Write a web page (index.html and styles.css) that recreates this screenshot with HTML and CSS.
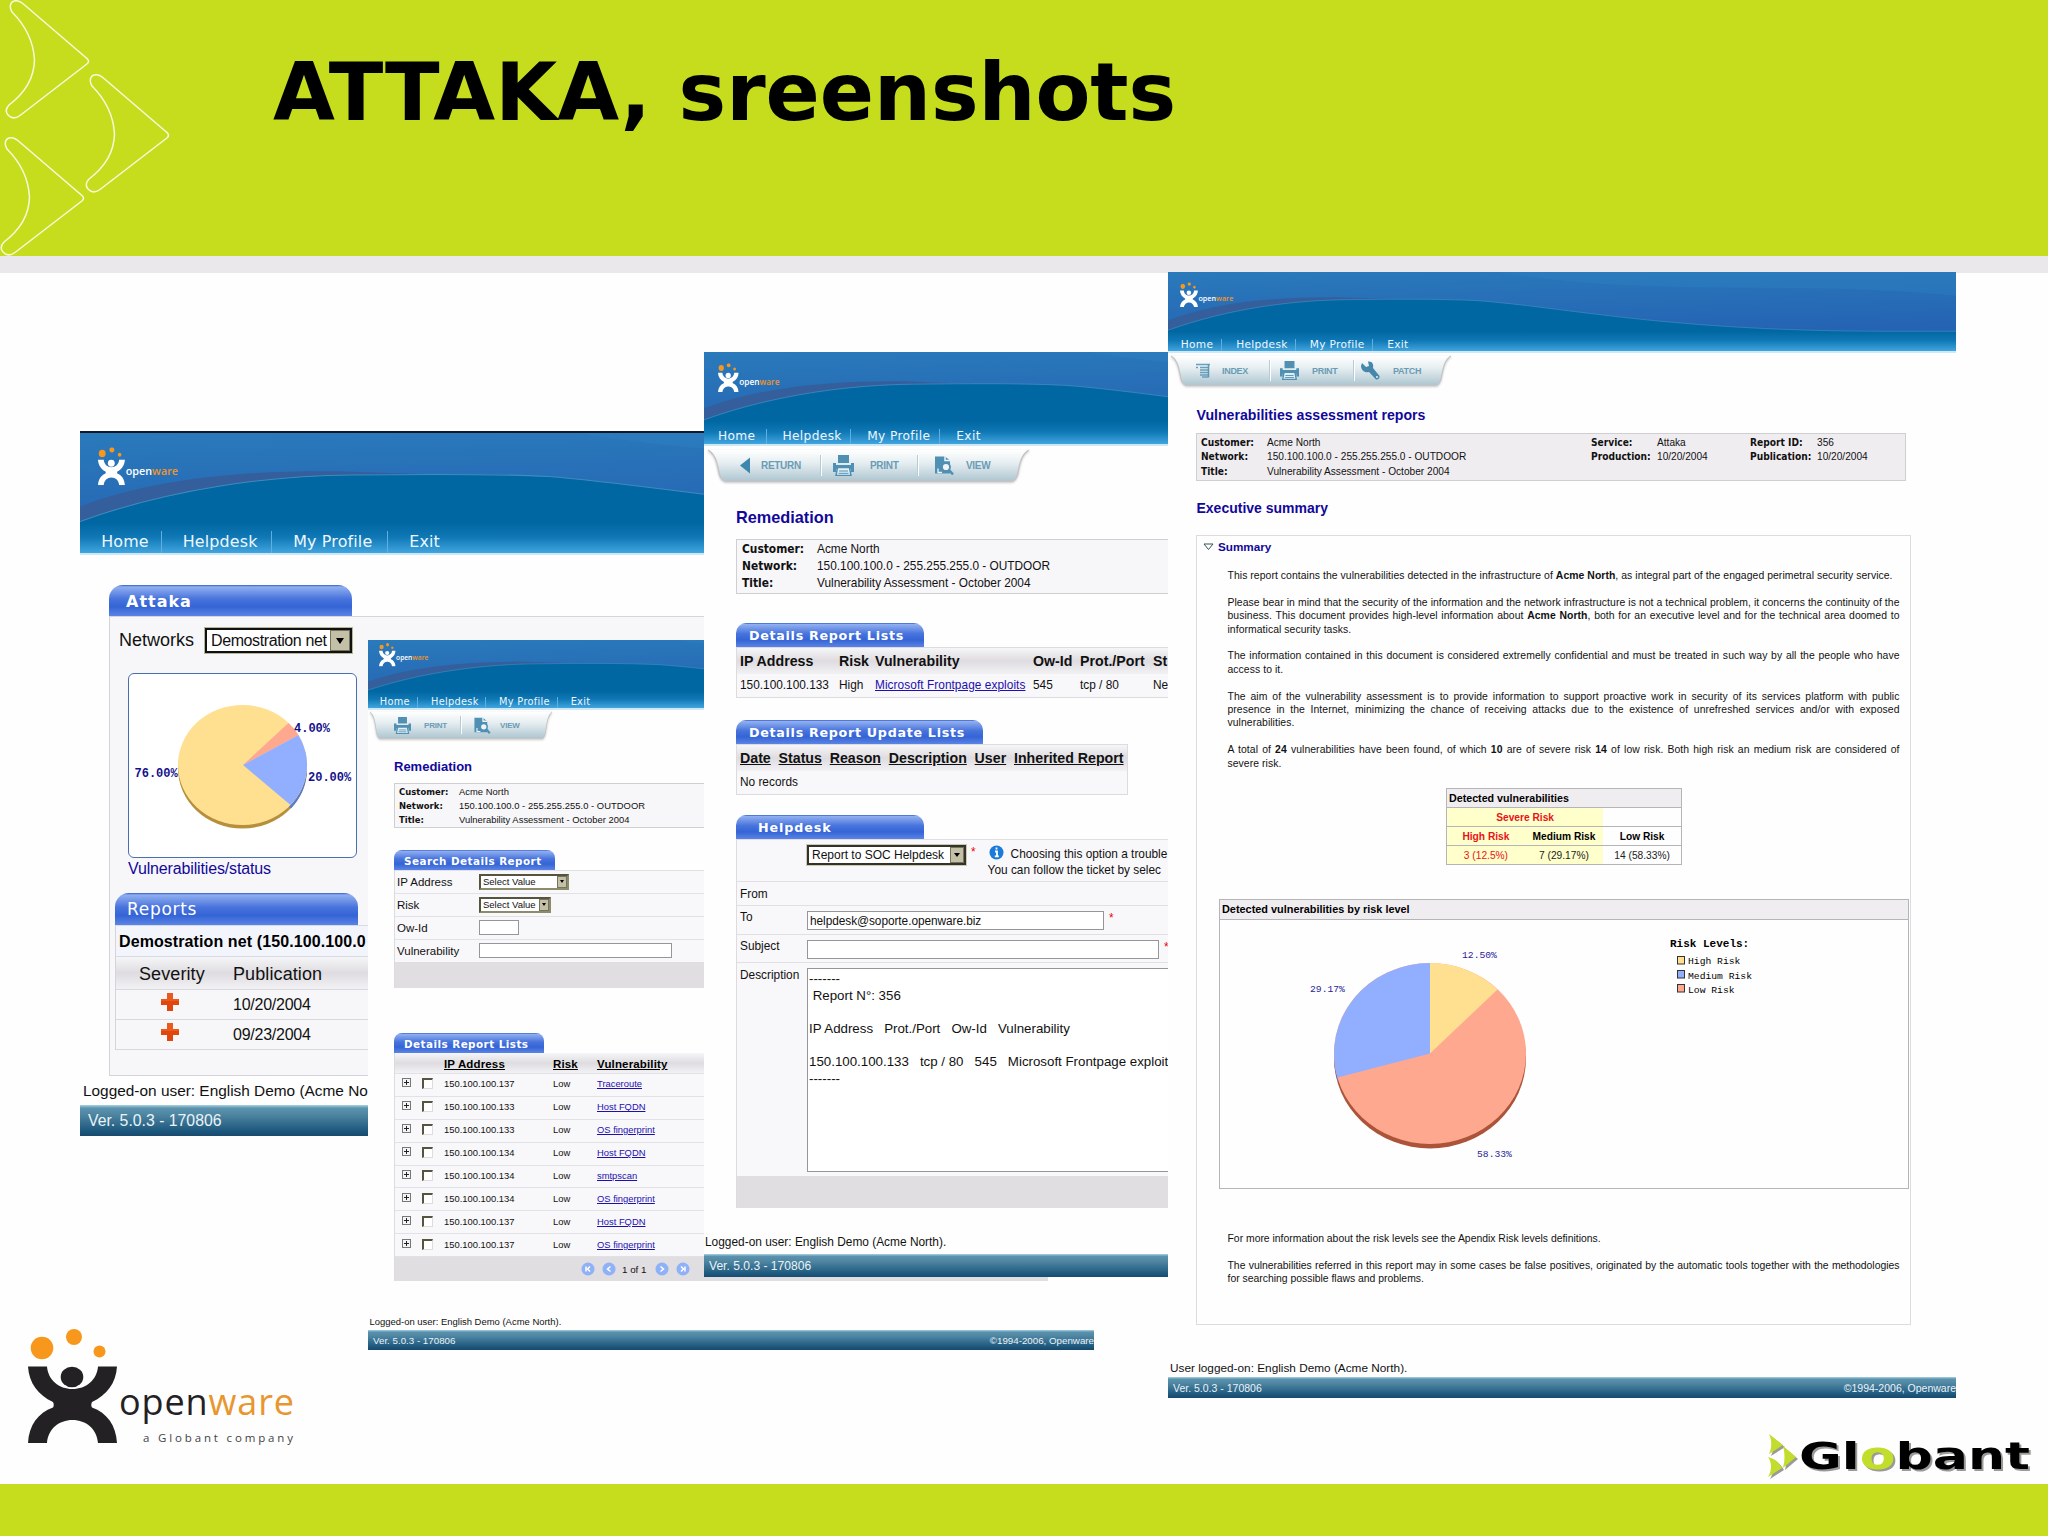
FILE: index.html
```html
<!DOCTYPE html>
<html lang="en">
<head>
    <meta charset="UTF-8">
    <meta name="viewport" content="width=device-width, initial-scale=1.0">
    <title>ATTAKA, sreenshots</title>
    <link rel="stylesheet" href="styles.css">
</head>
<body>
    <!-- Shared shapes -->
    <svg class="defs" width="0" height="0">
        <defs>
            <linearGradient id="sky" x1="0" y1="0" x2="0.25" y2="1">
                <stop offset="0" stop-color="#2a7abb"/>
                <stop offset="1" stop-color="#2460b2"/>
            </linearGradient>
            <linearGradient id="sea" x1="0" y1="0" x2="0" y2="1">
                <stop offset="0" stop-color="#0167a2"/>
                <stop offset="0.62" stop-color="#0167a2"/>
                <stop offset="0.8" stop-color="#0f78b5"/>
                <stop offset="1" stop-color="#41a5df"/>
            </linearGradient>
            <linearGradient id="metal" x1="0" y1="0" x2="0" y2="1">
                <stop offset="0" stop-color="#ffffff"/>
                <stop offset="0.4" stop-color="#e6eef1"/>
                <stop offset="1" stop-color="#abc4cf"/>
            </linearGradient>
        </defs>
        <symbol id="banner" viewBox="0 0 788 80" preserveAspectRatio="none">
            <rect width="788" height="80" fill="url(#sky)"/>
            <path d="M330 0C480 26 620 8 788 24V0Z" fill="#2f84c4" opacity="0.35"/>
            <path d="M0 49C50 30 110 25 170 25.500L230 27.500V60H0Z" fill="#345f9c"/>
            <path d="M0 59C60 37 125 28.500 180 28C220 27.500 270 27 310 29C400 36 500 60 720 60H788V80H0Z" fill="url(#sea)"/>
            <path d="M0 59C60 37 125 28.500 180 28C220 27.500 270 27 310 29C400 36 500 60 720 60H788" fill="none" stroke="#3f8bbf" stroke-width="0.7"/>
        </symbol>
        <symbol id="mark" viewBox="0 0 90 114" preserveAspectRatio="none">
            <g fill="#f7981d">
                <circle cx="14" cy="19" r="11.3"/>
                <circle cx="46" cy="8" r="8"/>
                <circle cx="71.5" cy="22.500" r="6"/>
            </g>
            <ellipse cx="44" cy="48" rx="11.300" ry="10.300"/>
            <path d="M0 37.500H19C20 51 31 60 44.500 60C58 60 69 51 70 37.500H89C88 54 79 66 64 73C63 75 63 77 64 78.500C79 84 88 96 89 114H70C69 100 58 91 44.500 91C31 91 20 100 19 114H0C1 96 10 84 25 78.500C26 77 26 75 25 73C10 66 1 54 0 37.500Z"/>
        </symbol>
        <symbol id="logo" viewBox="0 0 82 38.500">
            <use href="#mark" width="27.500" height="38.500" fill="#fff"/>
            <text x="28" y="28.500" class="logo-text" textLength="53" lengthAdjust="spacingAndGlyphs">open<tspan fill="#f0952a">ware</tspan></text>
        </symbol>
        <symbol id="tray" viewBox="0 0 280 31" preserveAspectRatio="none">
            <path d="M0 1C7 5 8 14 10 24Q12 31 17 31H264Q268 31 270 24C272 14 273 5 280 1Z" fill="url(#metal)"/>
            <path d="M0 1C7 5 8 14 10 24Q12 30.500 17 30.500H264Q268 30.500 270 24C272 14 273 5 280 1" fill="none" stroke="#c6c4c6" stroke-width="1.200"/>
        </symbol>
        <symbol id="i-print" viewBox="0 0 21 21">
            <path d="M5 0H16V8H5Z" fill="#4f90b3"/>
            <path d="M0 8H3V10H18V8H21V17H18V14H3V17H0Z" fill="#4f90b3"/>
            <path d="M4.500 12.500H16.500L18 20.500H3Z" fill="#e4eef3" stroke="#4f90b3" stroke-width="1.500"/>
            <path d="M6 16H15M5.500 18.300H15.500" stroke="#4f90b3"/>
        </symbol>
        <symbol id="i-view" viewBox="0 0 19 20">
            <path d="M0 1H10L15 5V18H0Z" fill="#4f90b3"/>
            <path d="M10 0V5H15" fill="none" stroke="#eef4f7" stroke-width="1.500"/>
            <circle cx="11" cy="11.500" r="4" fill="#eef4f7" stroke="#4f90b3" stroke-width="1.800"/>
            <path d="M3 13V17H7" fill="none" stroke="#eef4f7" stroke-width="1.300"/>
            <path d="M14 14.500L18 19" stroke="#4f90b3" stroke-width="2.600"/>
        </symbol>
        <symbol id="i-return" viewBox="0 0 11 17">
            <path d="M0 8.500L10 0.500V16.500Z" fill="#3f88ad"/>
        </symbol>
        <symbol id="i-index" viewBox="0 0 14 14">
            <path d="M0 1H14M4 4H13M0 4H2M4 6.500H13M4 9H13M4 11.500H13M6 13.500H12" stroke="#6a9fbb" stroke-width="1.500"/>
            <path d="M12.500 1V14" stroke="#5c96b5" stroke-width="1.500"/>
        </symbol>
        <symbol id="i-patch" viewBox="0 0 19 19">
            <path d="M1 2L5 6L8 5L7 0.500C11 0 13 3 12 7L18.500 15C19 17 17 19 15 18.500L8 11C4 12.500 0 9 0 5Z" fill="#4787ab"/>
            <circle cx="16" cy="16" r="1" fill="#e8f0f4"/>
        </symbol>
        <symbol id="i-cross" viewBox="0 0 18 18">
            <path d="M6 0H12V6H18V12H12V18H6V12H0V6H6Z" fill="#e0470d"/>
            <path d="M6 0H12V6H18V8H0V6H6Z" fill="#f0652a" opacity="0.6"/>
        </symbol>
        <symbol id="i-plus" viewBox="0 0 9 9">
            <rect x="0.500" y="0.500" width="8" height="8" fill="#f4f4f4" stroke="#777"/>
            <path d="M2 4.500H7M4.500 2V7" stroke="#222"/>
        </symbol>
    </svg>

    <header class="slide-header">
        <svg class="arrows" width="180" height="258" viewBox="0 0 180 258">
            <defs>
                <path id="arrow" d="M24 4.500L87.500 59Q89.500 61.500 87.500 63.500L20 115.500Q13 120.500 8 115Q4 110.500 9 105Q34 86 34.500 60Q33 33 12 12Q8.500 6 12 2Q17.500 -1.500 24 4.500Z"/>
            </defs>
            <use href="#arrow"/>
            <use href="#arrow" x="80" y="74"/>
            <use href="#arrow" x="-5" y="137"/>
        </svg>
        <h1>ATTAKA, sreenshots</h1>
    </header>

    <!-- Main menu window -->
    <section class="window win-home">
        <div class="banner">
            <svg class="sky"><use href="#banner"/></svg>
            <svg class="logo"><use href="#logo"/></svg>
            <nav><a>Home</a><a>Helpdesk</a><a>My Profile</a><a>Exit</a></nav>
        </div>
        <div class="tab">Attaka</div>
        <div class="panel">
            <div class="networks">
                <span>Networks</span>
                <div class="select"><span>Demostration net</span><i></i></div>
            </div>
            <div class="chart">
                <svg width="227" height="183" viewBox="130 674 227 183">
                    <ellipse cx="243.500" cy="768.500" rx="64.500" ry="60" fill="#b58f3c"/>
                    <path d="M244 765L292 808.500A64.500 60 0 0 0 308 768V765Z" fill="#5d7cc4"/>
                    <ellipse cx="243.500" cy="765" rx="64.500" ry="60" fill="#ffdf90"/>
                    <path d="M244 765L289.500 723A64.500 60 0 0 1 299.500 735Z" fill="#ffa890"/>
                    <path d="M244 765L299.500 735A64.500 60 0 0 1 291.500 805Z" fill="#92aeff"/>
                    <text x="295" y="732">4.00%</text>
                    <text x="135.500" y="777">76.00%</text>
                    <text x="309" y="781">20.00%</text>
                </svg>
            </div>
            <div class="status">Vulnerabilities/status</div>
            <div class="tab tab-reports">Reports</div>
            <div class="reports">
                <div class="net">Demostration net (150.100.100.0</div>
                <div class="cols head"><span>Severity</span><span>Publication</span></div>
                <div class="cols"><svg><use href="#i-cross"/></svg><span>10/20/2004</span></div>
                <div class="cols"><svg><use href="#i-cross"/></svg><span>09/23/2004</span></div>
            </div>
        </div>
        <div class="logged">Logged-on user: English Demo (Acme No</div>
        <div class="version"><span>Ver. 5.0.3 - 170806</span></div>
    </section>

    <!-- Remediation search window -->
    <section class="window win-search">
        <div class="banner">
            <svg class="sky"><use href="#banner"/></svg>
            <svg class="logo"><use href="#logo"/></svg>
            <nav><a>Home</a><a>Helpdesk</a><a>My Profile</a><a>Exit</a></nav>
        </div>
        <div class="toolbar">
            <svg class="tray"><use href="#tray"/></svg>
            <div class="tool"><svg><use href="#i-print"/></svg><b>PRINT</b></div>
            <div class="tool"><svg><use href="#i-view"/></svg><b>VIEW</b></div>
        </div>
        <h2>Remediation</h2>
        <dl class="info">
            <dt>Customer:</dt><dd>Acme North</dd>
            <dt>Network:</dt><dd>150.100.100.0 - 255.255.255.0 - OUTDOOR</dd>
            <dt>Title:</dt><dd>Vulnerability Assessment - October 2004</dd>
        </dl>
        <div class="tab tab-search">Search Details Report</div>
        <div class="form">
            <div class="field"><label>IP Address</label><div class="select ip"><span>Select Value</span><i></i></div></div>
            <div class="field"><label>Risk</label><div class="select risk"><span>Select Value</span><i></i></div></div>
            <div class="field"><label>Ow-Id</label><div class="input short"></div></div>
            <div class="field"><label>Vulnerability</label><div class="input long"></div></div>
            <div class="form-foot"></div>
        </div>
        <div class="tab tab-list">Details Report Lists</div>
        <div class="list">
            <div class="row head"><span></span><span></span><u>IP Address</u><u>Risk</u><u>Vulnerability</u></div>
            <div class="row"><svg><use href="#i-plus"/></svg><i class="check"></i><span>150.100.100.137</span><span>Low</span><a>Traceroute</a></div>
            <div class="row"><svg><use href="#i-plus"/></svg><i class="check"></i><span>150.100.100.133</span><span>Low</span><a>Host FQDN</a></div>
            <div class="row"><svg><use href="#i-plus"/></svg><i class="check"></i><span>150.100.100.133</span><span>Low</span><a>OS fingerprint</a></div>
            <div class="row"><svg><use href="#i-plus"/></svg><i class="check"></i><span>150.100.100.134</span><span>Low</span><a>Host FQDN</a></div>
            <div class="row"><svg><use href="#i-plus"/></svg><i class="check"></i><span>150.100.100.134</span><span>Low</span><a>smtpscan</a></div>
            <div class="row"><svg><use href="#i-plus"/></svg><i class="check"></i><span>150.100.100.134</span><span>Low</span><a>OS fingerprint</a></div>
            <div class="row"><svg><use href="#i-plus"/></svg><i class="check"></i><span>150.100.100.137</span><span>Low</span><a>Host FQDN</a></div>
            <div class="row"><svg><use href="#i-plus"/></svg><i class="check"></i><span>150.100.100.137</span><span>Low</span><a>OS fingerprint</a></div>
            <div class="pager">
                <svg viewBox="0 0 14 14"><circle cx="7" cy="7" r="6.500"/><path d="M5 4.500V9.500M9 4.500L6.500 7L9 9.500"/></svg>
                <svg viewBox="0 0 14 14"><circle cx="7" cy="7" r="6.500"/><path d="M8.500 4.500L5.500 7L8.500 9.500"/></svg>
                <span>1 of 1</span>
                <svg viewBox="0 0 14 14"><circle cx="7" cy="7" r="6.500"/><path d="M5.500 4.500L8.500 7L5.500 9.500"/></svg>
                <svg viewBox="0 0 14 14"><circle cx="7" cy="7" r="6.500"/><path d="M9 4.500V9.500M5 4.500L7.500 7L5 9.500"/></svg>
            </div>
        </div>
        <div class="logged">Logged-on user: English Demo (Acme North).</div>
        <div class="version"><span>Ver. 5.0.3 - 170806</span><span>©1994-2006, Openware</span></div>
    </section>

    <!-- Remediation ticket window -->
    <section class="window win-ticket">
        <div class="banner">
            <svg class="sky"><use href="#banner"/></svg>
            <svg class="logo"><use href="#logo"/></svg>
            <nav><a>Home</a><a>Helpdesk</a><a>My Profile</a><a>Exit</a></nav>
        </div>
        <div class="toolbar">
            <svg class="tray"><use href="#tray"/></svg>
            <div class="tool t-return"><svg><use href="#i-return"/></svg><b>RETURN</b></div>
            <div class="tool"><svg><use href="#i-print"/></svg><b>PRINT</b></div>
            <div class="tool"><svg><use href="#i-view"/></svg><b>VIEW</b></div>
        </div>
        <h2>Remediation</h2>
        <dl class="info">
            <dt>Customer:</dt><dd>Acme North</dd>
            <dt>Network:</dt><dd>150.100.100.0 - 255.255.255.0 - OUTDOOR</dd>
            <dt>Title:</dt><dd>Vulnerability Assessment - October 2004</dd>
        </dl>
        <div class="tab">Details Report Lists</div>
        <div class="details">
            <div class="row head"><span>IP Address</span><span>Risk</span><span>Vulnerability</span><span>Ow-Id</span><span>Prot./Port</span><span>St</span></div>
            <div class="row"><span>150.100.100.133</span><span>High</span><a>Microsoft Frontpage exploits</a><span>545</span><span>tcp / 80</span><span>Ne</span></div>
        </div>
        <div class="tab tab-update">Details Report Update Lists</div>
        <div class="updates">
            <div class="row head"><u>Date</u><u>Status</u><u>Reason</u><u>Description</u><u>User</u><u>Inherited Report</u></div>
            <div class="none">No records</div>
        </div>
        <div class="tab tab-help">Helpdesk</div>
        <div class="form">
            <div class="field f-option">
                <label></label>
                <div class="select"><span>Report to SOC Helpdesk</span><i></i></div>
                <em>*</em>
                <p><svg width="15" height="15" viewBox="0 0 15 15"><circle cx="7.500" cy="7.500" r="7" fill="#1b7bd8"/><path d="M7.500 2.500V4.500M6 6.500H8V11M5.800 11.300H9.800" fill="none" stroke="#fff" stroke-width="1.800"/></svg>Choosing this option a trouble<br>You can follow the ticket by selec</p>
            </div>
            <div class="field f-from"><label>From</label></div>
            <div class="field f-to"><label>To</label><div class="input">helpdesk@soporte.openware.biz</div><em>*</em></div>
            <div class="field f-subject"><label>Subject</label><div class="input"></div><em>*</em></div>
            <div class="field f-desc">
                <label>Description</label>
                <pre>-------
 Report N°: 356

IP Address   Prot./Port   Ow-Id   Vulnerability

150.100.100.133   tcp / 80   545   Microsoft Frontpage exploit
-------</pre>
            </div>
            <div class="form-foot"></div>
        </div>
        <div class="logged">Logged-on user: English Demo (Acme North).</div>
        <div class="version"><span>Ver. 5.0.3 - 170806</span></div>
    </section>

    <!-- Report window -->
    <section class="window win-report">
        <div class="banner">
            <svg class="sky"><use href="#banner"/></svg>
            <svg class="logo"><use href="#logo"/></svg>
            <nav><a>Home</a><a>Helpdesk</a><a>My Profile</a><a>Exit</a></nav>
        </div>
        <div class="toolbar">
            <svg class="tray"><use href="#tray"/></svg>
            <div class="tool t-index"><svg><use href="#i-index"/></svg><b>INDEX</b></div>
            <div class="tool"><svg><use href="#i-print"/></svg><b>PRINT</b></div>
            <div class="tool t-patch"><svg><use href="#i-patch"/></svg><b>PATCH</b></div>
        </div>
        <h2>Vulnerabilities assessment repors</h2>
        <dl class="info">
            <dt>Customer:</dt><dd>Acme North</dd><dt>Service:</dt><dd>Attaka</dd><dt>Report ID:</dt><dd>356</dd>
            <dt>Network:</dt><dd>150.100.100.0 - 255.255.255.0 - OUTDOOR</dd><dt>Production:</dt><dd>10/20/2004</dd><dt>Publication:</dt><dd>10/20/2004</dd>
            <dt>Title:</dt><dd>Vulnerability Assessment - October 2004</dd>
        </dl>
        <h2 class="exec">Executive summary</h2>
        <div class="summary">
            <h3><svg width="11" height="8" viewBox="0 0 11 8"><path d="M1 1H10L5.500 6.500Z" fill="#fff" stroke="#355" /></svg>Summary</h3>
            <p>This report contains the vulnerabilities detected in the infrastructure of <b>Acme North</b>, as integral part of the engaged perimetral security service.</p>
            <p>Please bear in mind that the security of the information and the network infrastructure is not a technical problem, it concerns the continuity of the business. This document provides high-level information about <b>Acme North</b>, both for an executive level and for the technical area doomed to informatical security tasks.</p>
            <p>The information contained in this document is considered extremelly confidential and must be treated in such way by all the people who have access to it.</p>
            <p>The aim of the vulnerability assessment is to provide information to support proactive work in security of its services platform with public presence&nbsp;in the Internet, minimizing the chance of receiving attacks due to the existence of unrefreshed services and/or with exposed vulnerabilities.</p>
            <p>A total of <b>24</b> vulnerabilities have been found, of which <b>10</b> are of severe risk <b>14</b> of low risk. Both high risk an medium risk are considered of severe&nbsp;risk.</p>
            <table>
                <tr class="t-title"><th colspan="3">Detected vulnerabilities</th></tr>
                <tr><th colspan="2" class="severe red">Severe Risk</th><th></th></tr>
                <tr><th class="severe red">High Risk</th><th class="severe">Medium Risk</th><th>Low Risk</th></tr>
                <tr><td class="severe red">3 (12.5%)</td><td class="severe">7 (29.17%)</td><td>14 (58.33%)</td></tr>
            </table>
            <div class="risk-chart">
                <h4>Detected vulnerabilities by risk level</h4>
                <svg width="688" height="268" viewBox="1220 920 688 268">
                    <ellipse cx="1430" cy="1058" rx="96" ry="90.500" fill="#ab5439"/>
                    <path d="M1334 1054V1058A96 90.500 0 0 0 1337.500 1081L1430 1054Z" fill="#5d7cc4"/>
                    <ellipse cx="1430" cy="1053.500" rx="96" ry="90.500" fill="#ffa890"/>
                    <path d="M1430 1053.500V963A96 90.500 0 0 1 1497.500 989.500Z" fill="#ffdf90"/>
                    <path d="M1430 1053.500V963A96 90.500 0 0 0 1337.500 1077.500Z" fill="#92aeff"/>
                    <g fill="#2a1f9c">
                        <text x="1462" y="958">12.50%</text>
                        <text x="1310" y="992">29.17%</text>
                        <text x="1477" y="1157">58.33%</text>
                    </g>
                    <text x="1670" y="947" class="legend-title">Risk Levels:</text>
                    <g stroke="#333">
                        <rect x="1677.500" y="956.500" width="7" height="7.500" fill="#ffdf90"/>
                        <rect x="1677.500" y="970.500" width="7" height="7.500" fill="#92aeff"/>
                        <rect x="1677.500" y="984.500" width="7" height="7.500" fill="#ffa890"/>
                    </g>
                    <text x="1688" y="964">High Risk</text>
                    <text x="1688" y="978.500">Medium Risk</text>
                    <text x="1688" y="993">Low Risk</text>
                </svg>
            </div>
            <p class="more">For more information about the risk levels see the Apendix Risk levels definitions.</p>
            <p class="notes">The vulnerabilities referred in this report may in some cases be false positives, originated by the automatic tools together with the methodologies for searching possible flaws and problems.</p>
        </div>
        <div class="logged">User logged-on: English Demo (Acme North).</div>
        <div class="version"><span>Ver. 5.0.3 - 170806</span><span>©1994-2006, Openware</span></div>
    </section>

    <svg class="openware" width="280" height="124" viewBox="20 1325 280 124">
        <use href="#mark" x="28" y="1329" width="90" height="114" fill="#242125"/>
        <text x="119" y="1415" class="ow-name" textLength="175">open<tspan fill="#e8962e">ware</tspan></text>
        <text x="143" y="1442" class="ow-sub" textLength="150">a Globant company</text>
    </svg>

    <svg class="globant" width="284" height="60" viewBox="1764 1428 284 60">
        <g fill="#c3dd2c">
            <path d="M1769 1434L1783 1445L1769 1454C1772 1447 1772 1441 1769 1434Z"/>
            <path d="M1783 1446L1796 1457L1783 1468C1785 1460 1785 1453 1783 1446Z"/>
            <path d="M1768 1457C1772 1459 1776 1458 1782 1468L1768 1477C1772 1470 1772 1463 1768 1457Z"/>
        </g>
        <text x="1799" y="1469" textLength="231" lengthAdjust="spacingAndGlyphs">Gl<tspan fill="#c3dd2c">o</tspan>bant</text>
    </svg>

    <footer class="slide-footer"></footer>
</body>
</html>
```
FILE: styles.css
```css
* {
    box-sizing: border-box;
}

body {
    margin: 0;
    width: 2048px;
    height: 1536px;
    overflow: hidden;
    position: relative;
    display: flex;
    flex-direction: column;
    justify-content: space-between;
    background-color: #fefefe;
    font-family: "Liberation Sans", Arial, sans-serif;
    color: #111;
}

h1, h2, h3, h4, p, dl, dd, pre {
    margin: 0;
}

.defs {
    position: absolute;
}

/* Slide */
.slide-header {
    height: 273px;
    background-color: #c6dd1d;
    border-bottom: 17px solid #ebe8eb;
    display: flex;
}

.arrows {
    fill: none;
    stroke: #f6fadc;
    stroke-width: 1.5;
}

.slide-header h1 {
    margin: 46px 0 0 93px;
    font: bold 80px/94px "DejaVu Sans", Verdana, sans-serif;
    letter-spacing: -0.05px;
    color: #000;
    white-space: nowrap;
}

.slide-footer {
    height: 52px;
    background-color: #c6dd1d;
}

.openware {
    position: absolute;
    left: 20px;
    top: 1325px;
}

.ow-name {
    font: 36px "Open Sans", sans-serif;
    fill: #242125;
}

.ow-sub {
    font: 11.5px "Open Sans", sans-serif;
    fill: #444;
}

.globant {
    position: absolute;
    left: 1764px;
    top: 1428px;
    filter: drop-shadow(2px 2px 0 #9a9a96);
}

.globant text {
    font: bold 38px "DejaVu Sans", sans-serif;
}

/* Windows */
.window {
    position: absolute;
    overflow: hidden;
    background-color: #fefefe;
    white-space: nowrap;
}

.banner {
    position: relative;
    overflow: hidden;
    display: flex;
    align-items: flex-end;
    border-bottom: 2px solid #cfe8f6;
    font-family: "DejaVu Sans", Verdana, sans-serif;
}

.sky {
    position: absolute;
    left: 0;
    top: 0;
    height: 100%;
}

.logo {
    position: absolute;
    left: 1.13em;
    top: 0.9em;
    width: 5.1em;
    height: 2.42em;
}

.logo-text {
    font: 600 11.5px "Open Sans", sans-serif;
    fill: #fff;
}

.banner nav {
    position: relative;
    display: flex;
    letter-spacing: 0.03em;
}

.banner nav a {
    padding-left: 1.3em;
    line-height: 1.1em;
    color: #eef7fd;
    border-right: 1px solid #5fb0e0;
}

.banner nav a:nth-child(1) {
    width: 5.13em;
    padding-left: 1.2em;
}

.banner nav a:nth-child(2) {
    width: 6.95em;
}

.banner nav a:nth-child(3) {
    width: 7.3em;
}

.banner nav a:nth-child(4) {
    border-right: none;
}

.tab {
    background: linear-gradient(#2f5cd0 0, #90aff0 6%, #4873dc 45%, #3464d6 70%, #5b84e4 100%);
    color: #fff;
    font-family: "DejaVu Sans", Verdana, sans-serif;
    font-weight: bold;
    display: flex;
    align-items: center;
}

.select {
    display: flex;
    flex-shrink: 0;
    background-color: #fff;
    border: 2px solid #55553f;
    border-right-color: #8c8c6c;
    border-bottom-color: #8c8c6c;
}

.select span {
    flex: 1;
    display: flex;
    align-items: center;
}

.select i {
    display: flex;
    align-items: center;
    justify-content: center;
    background-color: #c4c0a8;
    border: 1px solid #77745c;
}

.select i::after {
    content: "";
    border: 3px solid transparent;
    border-top: 4px solid #000;
    border-bottom: none;
}

.input {
    background-color: #fff;
    border: 1px solid #95959a;
    display: flex;
    align-items: center;
}

.info {
    display: grid;
    background-color: #f7f6f9;
    border: 1px solid #cfcfd2;
    align-items: center;
}

.info dt {
    font-family: "DejaVu Sans Condensed", "DejaVu Sans", sans-serif;
    font-stretch: condensed;
    font-weight: bold;
}

h2 {
    color: #12089a;
    display: flex;
    align-items: center;
}

.version {
    display: flex;
    justify-content: space-between;
    align-items: center;
    color: #eaf3f7;
    background: linear-gradient(#a9d3e2 0, #5b93ae 10%, #4f86a2 30%, #1b567c 85%, #19496c 100%);
}

.logged {
    display: flex;
    align-items: center;
}

.head {
    background: linear-gradient(#f6f5f7, #dedce0 50%, #f2f1f4);
}

.list a,
.details a {
    color: #1d10b0;
    text-decoration: underline;
}

/* Toolbars */
.toolbar {
    position: relative;
    display: flex;
}

.tray {
    position: absolute;
    left: 0;
    top: 0;
    width: 100%;
    height: 100%;
    filter: drop-shadow(0 1px 1px #c8c8c8);
}

.tool {
    position: relative;
    display: flex;
    align-items: center;
    color: #6a9cb5;
}

.tool + .tool::before {
    content: "";
    width: 1px;
    height: 65%;
    background-color: #fff;
    border-left: 1px solid #b7cbd4;
}

/* Main menu window */
.win-home {
    left: 80px;
    top: 431px;
    width: 640px;
    height: 705px;
    border-top: 2px solid #10182a;
}

.win-home .banner {
    height: 122px;
    font-size: 15.9px;
    padding-bottom: 0;
}

.win-home .sky {
    width: 1190px;
}

.win-home .banner nav {
    letter-spacing: 0.01em;
}

.win-home .banner nav a {
    padding-left: 1.33em;
    line-height: 22px;
}

.win-home .tab {
    margin: 30px 0 0 29px;
    width: 243px;
    height: 31px;
    padding-left: 17px;
    padding-top: 2px;
    border-radius: 14px 14px 0 0;
    font-size: 16px;
    letter-spacing: 1px;
}

.win-home .panel {
    margin-left: 29px;
    height: 460px;
    padding: 11px 0 0 5px;
    background-color: #f7f7fa;
    border: 1px solid #d4d4da;
}

.networks {
    display: flex;
    align-items: center;
    font-size: 18px;
}

.networks span {
    padding-left: 4px;
}

.networks > span {
    width: 90px;
}

.networks .select {
    width: 147px;
    height: 25px;
    font-size: 16px;
    letter-spacing: -0.4px;
    outline: 1px solid #b5b59a;
    border-color: #111;
}

.networks .select i {
    width: 20px;
}

.networks .select i::after {
    border-width: 6px 4px 0;
}

.chart {
    margin: 20px 0 0 13px;
    width: 229px;
    height: 185px;
    background-color: #fff;
    border: 1.5px solid #4b6fae;
    border-radius: 6px;
}

.chart svg {
    display: block;
}

.chart text {
    font: bold 12px "Liberation Mono", monospace;
    fill: #14108c;
}

.status {
    margin-left: 13px;
    height: 22px;
    font-size: 16px;
    letter-spacing: -0.15px;
    line-height: 21px;
    color: #12089a;
}

.win-home .tab-reports {
    margin: 13px 0 0 0;
    height: 32px;
    padding: 0 0 0 12px;
    font-size: 17px;
    font-weight: normal;
    letter-spacing: 0.7px;
}

.reports {
    border-left: 1px solid #d4d4da;
}

.reports .net {
    height: 32px;
    padding-left: 3px;
    line-height: 32px;
    font-size: 16px;
    font-weight: bold;
    letter-spacing: 0.1px;
    background-color: #f3f5fd;
    border-top: 1px solid #d8dae4;
    border-bottom: 1px solid #d8dae4;
    color: #000;
}

.cols {
    height: 30px;
    display: grid;
    grid-template-columns: 117px 1fr;
    align-items: center;
    padding-top: 1px;
    font-size: 16px;
    letter-spacing: -0.25px;
    border-bottom: 1px solid #d8d8de;
}

.cols.head {
    height: 33px;
    padding-top: 2px;
    font-size: 18px;
    letter-spacing: 0.1px;
}

.cols.head span:first-child {
    padding-left: 23px;
}

.cols svg {
    width: 18px;
    height: 18px;
    margin: 0 0 6px 45px;
}

.win-home .logged {
    height: 29px;
    padding-left: 3px;
    font-size: 15.4px;
}

.win-home .version {
    height: 31px;
    padding-left: 8px;
    font-size: 15.8px;
}

/* Remediation search window */
.win-search {
    left: 368px;
    top: 640px;
    width: 726px;
    height: 710px;
    font-size: 9.4px;
}

.win-search .banner {
    height: 70px;
    font-size: 9.8px;
}

.win-search .sky {
    width: 740px;
}

.win-search .logo {
    top: 0.3em;
}

.win-search .toolbar {
    margin: 1px 0 0 2px;
    width: 182px;
    height: 28px;
}

.win-search .tool:nth-child(2) {
    width: 90px;
    padding-left: 24px;
}

.win-search .tool:nth-child(2) svg {
    margin-right: 13px;
}

.win-search .tool svg {
    width: 17px;
    height: 17px;
}

.win-search .tool b {
    font-size: 8px;
    letter-spacing: -0.2px;
}

.win-search .tool:nth-child(3) svg {
    margin: 0 9px 0 12px;
}

.win-search h2 {
    margin: 17px 0 0 26px;
    height: 20px;
    font-size: 13px;
}

.win-search .info {
    margin: 7px 0 0 26px;
    width: 654px;
    height: 45px;
    padding: 1px 0 1px 4px;
    grid-template-columns: 60px 1fr;
    letter-spacing: 0.04px;
}

.win-search .tab {
    margin-left: 26px;
    height: 20px;
    padding: 1px 0 0 10px;
    border-radius: 8px 8px 0 0;
    font-size: 10.4px;
    letter-spacing: 0.45px;
}

.win-search .tab-search {
    margin-top: 22px;
    width: 161px;
}

.win-search .form {
    margin-left: 26px;
    width: 654px;
    background-color: #f8f7fa;
    border-left: 1px solid #dcdce0;
}

.win-search .field {
    height: 23px;
    padding-left: 2px;
    padding-bottom: 1px;
    display: flex;
    align-items: center;
    border-top: 1px solid #e2e2e6;
    font-size: 11.5px;
}

.win-search .field label {
    width: 82px;
}

.win-search .select {
    height: 16px;
    font-size: 9.5px;
}

.win-search .select span {
    padding-left: 2px;
}

.win-search .select i {
    width: 10px;
}

.win-search .select i::after {
    border-width: 3px 2px 0;
}

.select.ip {
    width: 90px;
}

.select.risk {
    width: 72px;
}

.win-search .input {
    height: 15px;
}

.input.short {
    width: 40px;
}

.input.long {
    width: 193px;
}

.win-search .form-foot {
    height: 26px;
    background-color: #e1dee2;
}

.win-search .tab-list {
    margin-top: 45px;
    width: 150px;
}

.list {
    margin-left: 26px;
    width: 654px;
    border-left: 1px solid #dcdce0;
    background-color: #f8f7fa;
}

.list .row {
    height: 22.9px;
    display: grid;
    grid-template-columns: 20px 22px 109px 44px 1fr;
    align-items: center;
    padding-left: 7px;
    padding-bottom: 2px;
    border-bottom: 1px solid #e2e2e6;
}

.list .row.head {
    height: 21px;
    padding-top: 2px;
    padding-bottom: 0;
    font-size: 11.5px;
    letter-spacing: 0.15px;
    font-weight: bold;
    color: #000;
}

.list .row svg {
    width: 9px;
    height: 9px;
    margin-bottom: 2px;
}

.check {
    width: 11px;
    height: 11px;
    background-color: #fff;
    border: 2px solid #55553f;
    border-right: 1px solid #ddd;
    border-bottom: 1px solid #ddd;
}

.pager {
    height: 24px;
    padding-left: 186px;
    display: flex;
    align-items: center;
    background-color: #e1dee2;
    font-size: 9.8px;
}

.pager svg {
    width: 14px;
    height: 14px;
    margin-right: 6.5px;
}

.pager span {
    width: 33px;
}

.pager circle {
    fill: #8fb1f7;
}

.pager path {
    fill: none;
    stroke: #fff;
    stroke-width: 1.5;
}

.win-search .logged {
    margin-top: 32px;
    height: 17px;
    padding-left: 1.5px;
    padding-bottom: 1px;
    font-size: 9.46px;
}

.win-search .version {
    height: 20px;
    padding-left: 5px;
    font-size: 9.75px;
}

/* Remediation ticket window */
.win-ticket {
    left: 704px;
    top: 352px;
    width: 466px;
    height: 925px;
    font-size: 11.85px;
}

.win-ticket .banner {
    height: 94px;
    font-size: 12.2px;
}

.win-ticket .banner nav a {
    line-height: 1.25em;
}

.win-ticket .banner nav a:first-child {
    padding-left: 1.15em;
}

.win-ticket .sky {
    width: 920px;
}

.win-ticket .toolbar {
    margin: 3px 0 0 4px;
    width: 321px;
    height: 33px;
}

.win-ticket .tool svg {
    width: 21px;
    height: 21px;
}

.win-ticket .tool b {
    font-size: 10px;
    letter-spacing: -0.3px;
}

.win-ticket .t-return {
    width: 112px;
    padding-left: 32px;
}

.win-ticket .t-return svg {
    width: 11px;
    height: 17px;
    margin-right: 10px;
}

.win-ticket .tool:nth-child(3) {
    width: 97px;
}

.win-ticket .tool:nth-child(3) svg {
    margin: 0 16px 0 11px;
}

.win-ticket .tool:nth-child(4) svg {
    width: 19px;
    margin: 0 12px 0 16px;
}

.win-ticket h2 {
    margin: 23px 0 0 32px;
    height: 24px;
    font-size: 16.3px;
}

.win-ticket .info {
    margin: 10px 0 0 32px;
    width: 500px;
    height: 55px;
    padding: 0 0 1px 5px;
    grid-template-columns: 75px 1fr;
}

.win-ticket .tab {
    margin: 29px 0 0 32px;
    width: 188px;
    height: 24px;
    padding: 1px 0 0 13px;
    border-radius: 10px 10px 0 0;
    font-size: 12.7px;
    letter-spacing: 0.7px;
}

.details {
    margin-left: 32px;
    background-color: #f8f7fa;
    border: 1px solid #dcdce0;
}

.details .row {
    height: 23px;
    display: grid;
    grid-template-columns: 99px 36px 158px 47px 73px 1fr;
    align-items: center;
    padding: 0 0 2px 3px;
}

.details .row.head {
    height: 26px;
    padding-bottom: 1px;
    font-size: 14.2px;
    font-weight: bold;
}

.details a {
    letter-spacing: 0.06px;
}

.win-ticket .tab-update {
    margin-top: 22px;
    width: 247px;
}

.updates {
    margin-left: 32px;
    width: 392px;
    border: 1px solid #dcdce0;
    background-color: #f8f7fa;
}

.updates .row {
    height: 26px;
    display: flex;
    gap: 7.8px;
    align-items: center;
    padding-left: 3px;
    font-size: 14.2px;
    font-weight: bold;
}

.none {
    height: 23px;
    padding: 0 0 2px 3px;
    display: flex;
    align-items: center;
}

.win-ticket .tab-help {
    margin-top: 20px;
    padding-left: 22px;
    letter-spacing: 0.9px;
}

.win-ticket .form {
    margin-left: 32px;
    background-color: #f8f7fa;
    border-left: 1px solid #dcdce0;
}

.win-ticket .field {
    display: flex;
    padding: 5px 0 0 3px;
    border-top: 1px solid #dfdfe4;
}

.win-ticket .field label {
    width: 67px;
    flex-shrink: 0;
}

.win-ticket .field em {
    margin-left: 5px;
    font-style: normal;
    color: #e00;
}

.f-option {
    height: 42px;
}

.f-option .select {
    width: 159px;
    height: 20px;
    font-size: 12px;
    border-color: #33332a;
    outline: 1px solid #c9c9b4;
}

.f-option .select span {
    padding-left: 3px;
}

.f-option .select i {
    width: 14px;
}

.f-option p {
    margin-left: 12px;
    padding-top: 1px;
    line-height: 16px;
}

.f-option p svg {
    margin: -5px 7px 0 1px;
    vertical-align: middle;
}

.f-from {
    height: 24px;
}

.f-to,
.f-subject {
    height: 28.6px;
}

.win-ticket .f-to label,
.win-ticket .f-subject label {
    margin-top: -1px;
}

.win-ticket .input {
    width: 297px;
    height: 19px;
    padding-left: 2px;
    letter-spacing: -0.05px;
}

.win-ticket .f-subject .input {
    width: 352px;
}

.f-desc {
    height: 214px;
}

.f-desc pre {
    width: 500px;
    height: 204px;
    padding: 2px 0 0 1px;
    background-color: #fff;
    border: 1px solid #95959a;
    font: 13.3px/16.6px "Liberation Sans", Arial, sans-serif;
}

.win-ticket .form-foot {
    height: 32px;
    background-color: #e1dee2;
}

.win-ticket .logged {
    margin-top: 21px;
    height: 25px;
    padding-left: 1px;
    font-size: 11.9px;
}

.win-ticket .version {
    height: 24px;
    padding-left: 5px;
    padding-bottom: 1px;
    font-size: 12.1px;
}

/* Report window */
.win-report {
    left: 1168px;
    top: 272px;
    width: 788px;
    height: 1126px;
    font-size: 10.15px;
}

.win-report .banner {
    height: 81px;
    font-size: 10.6px;
}

.win-report .sky {
    width: 788px;
}

.win-report .toolbar {
    margin: 2px 0 0 3px;
    width: 280px;
    height: 31px;
}

.win-report .tool svg {
    width: 19px;
    height: 19px;
}

.win-report .tool b {
    font-size: 9px;
    letter-spacing: -0.3px;
}

.win-report .t-index {
    width: 98px;
    padding-left: 25px;
}

.win-report .t-index svg {
    width: 14px;
    margin-right: 12px;
}

.win-report .tool:nth-child(3) {
    width: 84px;
}

.win-report .tool:nth-child(3) svg {
    margin: 0 13px 0 9px;
}

.win-report .t-patch svg {
    margin: 0 13px 0 6px;
}

.win-report h2 {
    margin: 19px 0 0 28.5px;
    height: 20px;
    font-size: 14.15px;
}

.win-report .info {
    margin: 8px 0 0 28px;
    width: 710px;
    height: 48px;
    padding: 1px 0 1px 4px;
    grid-template-columns: 66px 324px 66px 93px 67px 1fr;
    background-color: #f0edf1;
}

.win-report h2.exec {
    margin-top: 17px;
    font-size: 14px;
}

.summary {
    margin: 17px 0 0 28px;
    width: 715px;
    height: 790px;
    border: 1px solid #dcdcde;
}

.summary h3 {
    margin: 2px 0 0 6px;
    height: 18px;
    padding-bottom: 1px;
    display: flex;
    align-items: center;
    gap: 4px;
    font-size: 11.7px;
    color: #12089a;
}

.summary p {
    margin: 0 0 13.4px 30.5px;
    width: 672px;
    white-space: normal;
    text-align: justify;
    font-size: 10.4px;
    letter-spacing: 0.065px;
    line-height: 13.4px;
}

.summary h3 + p {
    margin-top: 13px;
}

.summary table {
    margin: 18px 0 0 249px;
    width: 236px;
    height: 77px;
    table-layout: fixed;
    border-collapse: collapse;
    border: 1px solid #b5b5b8;
}

.summary tr {
    border-bottom: 1px solid #b5b5b8;
}

.summary th,
.summary td {
    height: 18.5px;
    padding: 0;
    text-align: center;
    font-size: 10.2px;
    color: #000;
}

.summary td {
    color: #222;
}

.summary .t-title th {
    padding-left: 2px;
    text-align: left;
    font-size: 10.7px;
    background-color: #f0edf1;
}

.summary .severe {
    background-color: #ffffcb;
}

.summary .red {
    color: #e8121a;
}

.risk-chart {
    margin: 34px 0 0 22px;
    width: 690px;
    height: 290px;
    border: 1px solid #b5b5b8;
}

.risk-chart h4 {
    height: 20px;
    padding-left: 2px;
    line-height: 19px;
    font-size: 10.9px;
    background-color: #f0edf1;
    border-bottom: 1px solid #b5b5b8;
    color: #000;
}

.risk-chart svg {
    display: block;
}

.risk-chart text {
    font: 9.7px "Liberation Mono", monospace;
}

.risk-chart .legend-title {
    font-size: 11px;
    font-weight: bold;
}

.summary .more {
    margin-top: 43px;
    letter-spacing: 0;
}

.summary .notes {
    letter-spacing: 0;
}

.win-report .logged {
    margin-top: 33px;
    height: 19px;
    padding-left: 2px;
    font-size: 11.8px;
}

.win-report .version {
    height: 21px;
    padding-left: 5px;
    font-size: 10.5px;
}
```
